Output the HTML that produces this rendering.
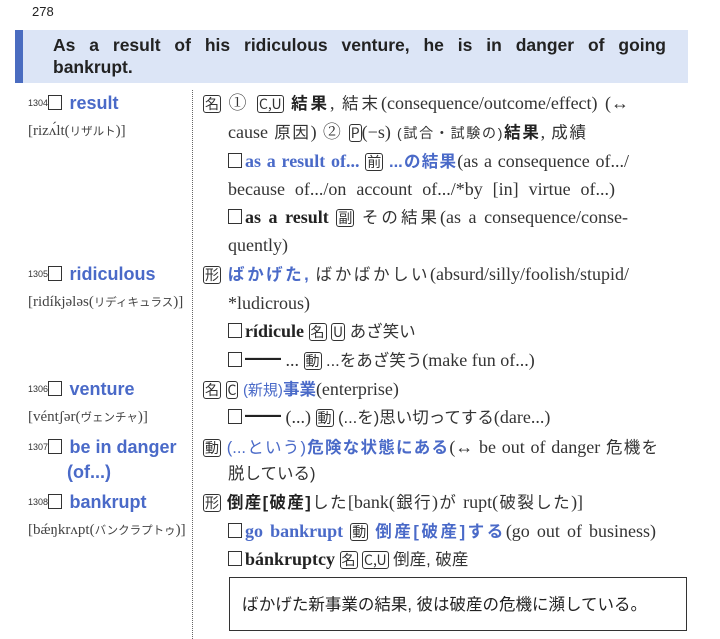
<!DOCTYPE html><html><head><meta charset="utf-8"><style>
body{margin:0;width:720px;height:639px;background:#fff;position:relative;overflow:hidden;font-family:"Liberation Serif","Noto Serif CJK SC","Noto Sans CJK JP",serif;color:#333;font-size:18px}
.a{position:absolute;white-space:nowrap;line-height:20px}
.f{text-align:justify;text-align-last:justify;white-space:normal}
.b{color:#4a6ac8;font-weight:bold;font-family:"Liberation Sans","Noto Sans CJK JP",sans-serif}
.hw{color:#4a6ac8;font-family:"Liberation Sans",sans-serif;font-weight:bold;font-size:18px}
.n{font-size:9px;font-family:"Liberation Sans",sans-serif;vertical-align:top}
.k{display:inline-block;border:1px solid #333;border-radius:3px;font-size:14px;line-height:16px;padding:0 1px;font-family:"Noto Sans CJK JP",sans-serif}
.sq{display:inline-block;width:12px;height:13px;border:1.5px solid #333;vertical-align:-1px;margin-right:3px}
.j{font-family:"Liberation Sans","Noto Sans CJK JP",sans-serif;font-size:16.5px}
.pr{font-size:15px;color:#444}
.pr i{font-style:normal;font-size:11.5px;font-family:"Noto Sans CJK JP",sans-serif}
b{color:#222}
</style></head><body>
<div class="a" style="left:32px;top:2px;font-family:'Liberation Sans',sans-serif;font-size:13px;color:#222">278</div>
<div style="position:absolute;left:15px;top:30px;width:8px;height:53px;background:#4a6cc0"></div>
<div style="position:absolute;left:23px;top:30px;width:665px;height:53px;background:#dce5f6"></div>
<div class="a" style="left:53px;top:34px;width:613px;font-family:'Liberation Sans',sans-serif;font-weight:bold;font-size:17.5px;color:#222;text-align:justify;text-align-last:justify;line-height:22px">As a result of his ridiculous venture, he is in danger of going</div>
<div class="a" style="left:53px;top:56px;font-family:'Liberation Sans',sans-serif;font-weight:bold;font-size:17.5px;color:#222;line-height:22px">bankrupt.</div>
<div style="position:absolute;left:192px;top:90px;height:549px;border-left:1px dotted #666"></div>

<div class="a" style="left:28px;top:93px"><span class="n">1304</span><span class="sq"></span> <span class="hw">result</span></div>
<div class="a pr" style="left:28px;top:121px">[rizʌ́lt(<i>リザルト</i>)]</div>
<div class="a" style="left:28px;top:264px"><span class="n">1305</span><span class="sq"></span> <span class="hw">ridiculous</span></div>
<div class="a pr" style="left:28px;top:292px">[ridíkjələs(<i>リディキュラス</i>)]</div>
<div class="a" style="left:28px;top:379px"><span class="n">1306</span><span class="sq"></span> <span class="hw">venture</span></div>
<div class="a pr" style="left:28px;top:407px">[véntʃər(<i>ヴェンチャ</i>)]</div>
<div class="a" style="left:28px;top:437px"><span class="n">1307</span><span class="sq"></span> <span class="hw">be in danger</span></div>
<div class="a hw" style="left:67px;top:462px">(of...)</div>
<div class="a" style="left:28px;top:492px"><span class="n">1308</span><span class="sq"></span> <span class="hw">bankrupt</span></div>
<div class="a pr" style="left:28px;top:520px">[bǽŋkrʌpt(<i>バンクラプトゥ</i>)]</div>

<div class="a f" style="left:203px;top:93px;width:426px"><span class="k">名</span> ① <span class="k">C,U</span> <b class="j">結果</b>, <span class="j">結末</span>(consequence/outcome/effect) (↔</div>
<div class="a f" style="left:228px;top:122px;width:358px">cause <span class="j">原因</span>) ② <span class="k">P</span>(−s) <span class="j" style="font-size:14px">(試合・試験の)</span><b class="j">結果</b>, <span class="j">成績</span></div>
<div class="a f" style="left:228px;top:151px;width:401px"><span class="sq"></span><span style="color:#4a6ac8;font-weight:bold">as a result of...</span> <span class="k">前</span> <span class="b j">...の結果</span>(as a consequence of.../</div>
<div class="a f" style="left:228px;top:179px;width:387px">because of.../on account of.../*by [in] virtue of...)</div>
<div class="a f" style="left:228px;top:207px;width:400px"><span class="sq"></span><b>as a result</b> <span class="k">副</span> <span class="j">その結果</span>(as a consequence/conse-</div>
<div class="a" style="left:228px;top:235px">quently)</div>
<div class="a f" style="left:203px;top:264px;width:426px"><span class="k">形</span> <span class="b j">ばかげた,</span> <span class="j">ばかばかしい</span>(absurd/silly/foolish/stupid/</div>
<div class="a" style="left:228px;top:293px">*ludicrous)</div>
<div class="a" style="left:228px;top:321px"><span class="sq"></span><b>rídicule</b> <span class="k">名</span> <span class="k">U</span> <span class="j">あざ笑い</span></div>
<div class="a" style="left:228px;top:350px"><span class="sq"></span><b>━━</b> ... <span class="k">動</span> <span class="j">...をあざ笑う</span>(make fun of...)</div>
<div class="a" style="left:203px;top:379px"><span class="k">名</span> <span class="k">C</span> <span style="color:#4a6ac8;font-size:15px" class="j">(新規)</span><span class="b j">事業</span>(enterprise)</div>
<div class="a" style="left:228px;top:407px"><span class="sq"></span><b>━━</b> (...) <span class="k">動</span> <span class="j">(...を)思い切ってする</span>(dare...)</div>
<div class="a f" style="left:203px;top:437px;width:455px"><span class="k">動</span> <span style="color:#4a6ac8" class="j">(...という)</span><span class="b j">危険な状態にある</span>(↔ be out of danger <span class="j">危機を</span></div>
<div class="a j" style="left:228px;top:464px">脱している)</div>
<div class="a f" style="left:203px;top:492px;width:380px"><span class="k">形</span> <b class="j">倒産[破産]</b><span class="j">した</span>[bank(<span class="j">銀行</span>)<span class="j">が</span> rupt(<span class="j">破裂した</span>)]</div>
<div class="a f" style="left:228px;top:521px;width:428px"><span class="sq"></span><span style="color:#4a6ac8;font-weight:bold">go bankrupt</span> <span class="k">動</span> <span class="b j">倒産[破産]する</span>(go out of business)</div>
<div class="a" style="left:228px;top:549px"><span class="sq"></span><b>bánkruptcy</b> <span class="k">名</span> <span class="k">C,U</span> <span class="j">倒産, 破産</span></div>
<div style="position:absolute;left:229px;top:577px;width:458px;height:54px;border:1.5px solid #333;box-sizing:border-box"></div>
<div class="a j" style="left:242px;top:595px;font-size:16.5px;color:#222">ばかげた新事業の結果, 彼は破産の危機に瀕している。</div>
</body></html>
